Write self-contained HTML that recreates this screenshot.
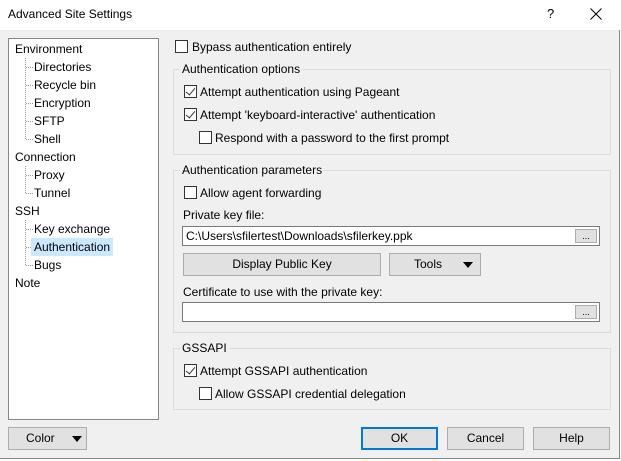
<!DOCTYPE html>
<html><head><style>
*{box-sizing:border-box;margin:0;padding:0}
body{width:621px;height:461px;background:#fff;font-family:"Liberation Sans",sans-serif;font-size:12px;color:#000;position:relative;overflow:hidden}
.a{position:absolute}
.win{left:0;top:30px;width:620px;height:429px;background:#f0f0f0;border-right:1px solid #888;border-bottom:1px solid #888}
.tree{left:8px;top:38px;width:151px;height:382px;background:#fff;border:1px solid #828790}
.t{position:absolute;white-space:nowrap;line-height:16px}
.grp{border:1px solid #dcdcdc;position:absolute}
.lbl{position:absolute;background:#f0f0f0;padding:0 2px;line-height:14px;top:-8px;left:6px}
.cb{position:absolute;width:13px;height:13px;border:1px solid #333;background:#fff}
.cb.c::after{content:"";position:absolute;left:3px;top:0px;width:4px;height:8px;border:solid #333;border-width:0 1.5px 1.5px 0;transform:rotate(40deg)}
.btn{position:absolute;background:#e1e1e1;border:1px solid #adadad;text-align:center;line-height:20px}
.tri{display:inline-block;width:0;height:0;border-left:5px solid transparent;border-right:5px solid transparent;border-top:6px solid #000;vertical-align:middle}
.ed{position:absolute;background:#fff;border:1px solid #7a7a7a;height:20px;line-height:18px;padding-left:3px}
.dots{position:absolute;right:2px;top:2px;width:22px;height:14px;background:#e1e1e1;border:1px solid #adadad;font-size:9px;line-height:12px;text-align:center}
.dl{position:absolute;border-left:1px dotted #999}
.dh{position:absolute;width:7px;border-top:1px dotted #999}
</style></head><body>
<div class="a" style="left:8px;top:7px;font-size:12px">Advanced Site Settings</div>
<div class="a" style="left:547px;top:6px;font-size:13px">?</div>
<svg class="a" style="left:590px;top:8px" width="12" height="12"><path d="M0.5 0.5L11.5 11.5M11.5 0.5L0.5 11.5" stroke="#000" stroke-width="1"/></svg>
<div class="a win"></div>
<div class="a tree">
<div class="t" style="left:6px;top:2px">Environment</div>
<div class="dl" style="left:16px;top:19px;height:81px"></div>
<div class="dh" style="left:17px;top:28px"></div><div class="t" style="left:25px;top:20px">Directories</div>
<div class="dh" style="left:17px;top:46px"></div><div class="t" style="left:25px;top:38px">Recycle bin</div>
<div class="dh" style="left:17px;top:64px"></div><div class="t" style="left:25px;top:56px">Encryption</div>
<div class="dh" style="left:17px;top:82px"></div><div class="t" style="left:25px;top:74px">SFTP</div>
<div class="dh" style="left:17px;top:100px"></div><div class="t" style="left:25px;top:92px">Shell</div>
<div class="t" style="left:6px;top:110px">Connection</div>
<div class="dl" style="left:16px;top:127px;height:27px"></div>
<div class="dh" style="left:17px;top:136px"></div><div class="t" style="left:25px;top:128px">Proxy</div>
<div class="dh" style="left:17px;top:154px"></div><div class="t" style="left:25px;top:146px">Tunnel</div>
<div class="t" style="left:6px;top:164px">SSH</div>
<div class="dl" style="left:16px;top:181px;height:45px"></div>
<div class="dh" style="left:17px;top:190px"></div><div class="t" style="left:25px;top:182px">Key exchange</div>
<div class="dh" style="left:17px;top:208px"></div><div class="t" style="left:22px;top:199px;background:#cce8ff;padding:1px 3px;">Authentication</div>
<div class="dh" style="left:17px;top:226px"></div><div class="t" style="left:25px;top:218px">Bugs</div>
<div class="t" style="left:6px;top:236px">Note</div>
</div>

<div class="cb" style="left:175px;top:40px"></div><div class="t" style="left:192px;top:39px">Bypass authentication entirely</div>

<div class="grp" style="left:173px;top:69px;width:438px;height:86px"><div class="lbl">Authentication options</div></div>
<div class="cb c" style="left:184px;top:85px"></div><div class="t" style="left:200px;top:84px">Attempt authentication using Pageant</div>
<div class="cb c" style="left:184px;top:108px"></div><div class="t" style="left:200px;top:107px">Attempt 'keyboard-interactive' authentication</div>
<div class="cb" style="left:199px;top:131px"></div><div class="t" style="left:215px;top:130px">Respond with a password to the first prompt</div>

<div class="grp" style="left:173px;top:170px;width:438px;height:163px"><div class="lbl">Authentication parameters</div></div>
<div class="cb" style="left:184px;top:186px"></div><div class="t" style="left:200px;top:185px">Allow agent forwarding</div>
<div class="t" style="left:183px;top:207px">Private key file:</div>
<div class="ed" style="left:182px;top:226px;width:418px">C:\Users\sfilertest\Downloads\sfilerkey.ppk<div class="dots">...</div></div>
<div class="btn" style="left:183px;top:253px;width:198px;height:23px">Display Public Key</div>
<div class="btn" style="left:389px;top:253px;width:92px;height:23px;text-align:left;padding-left:24px">Tools <span class="tri" style="margin-left:18px"></span></div>
<div class="t" style="left:183px;top:284px">Certificate to use with the private key:</div>
<div class="ed" style="left:182px;top:302px;width:418px"><div class="dots">...</div></div>

<div class="grp" style="left:173px;top:348px;width:438px;height:62px"><div class="lbl">GSSAPI</div></div>
<div class="cb c" style="left:184px;top:364px"></div><div class="t" style="left:200px;top:363px">Attempt GSSAPI authentication</div>
<div class="cb" style="left:199px;top:387px"></div><div class="t" style="left:215px;top:386px">Allow GSSAPI credential delegation</div>

<div class="btn" style="left:8px;top:427px;width:79px;height:23px;text-align:left;padding-left:17px">Color <span class="tri" style="margin-left:14px"></span></div>
<div class="btn" style="left:361px;top:427px;width:77px;height:23px;border:2px solid #0078d7;line-height:19px">OK</div>
<div class="btn" style="left:447px;top:427px;width:77px;height:23px">Cancel</div>
<div class="btn" style="left:533px;top:427px;width:77px;height:23px">Help</div>
</body></html>
